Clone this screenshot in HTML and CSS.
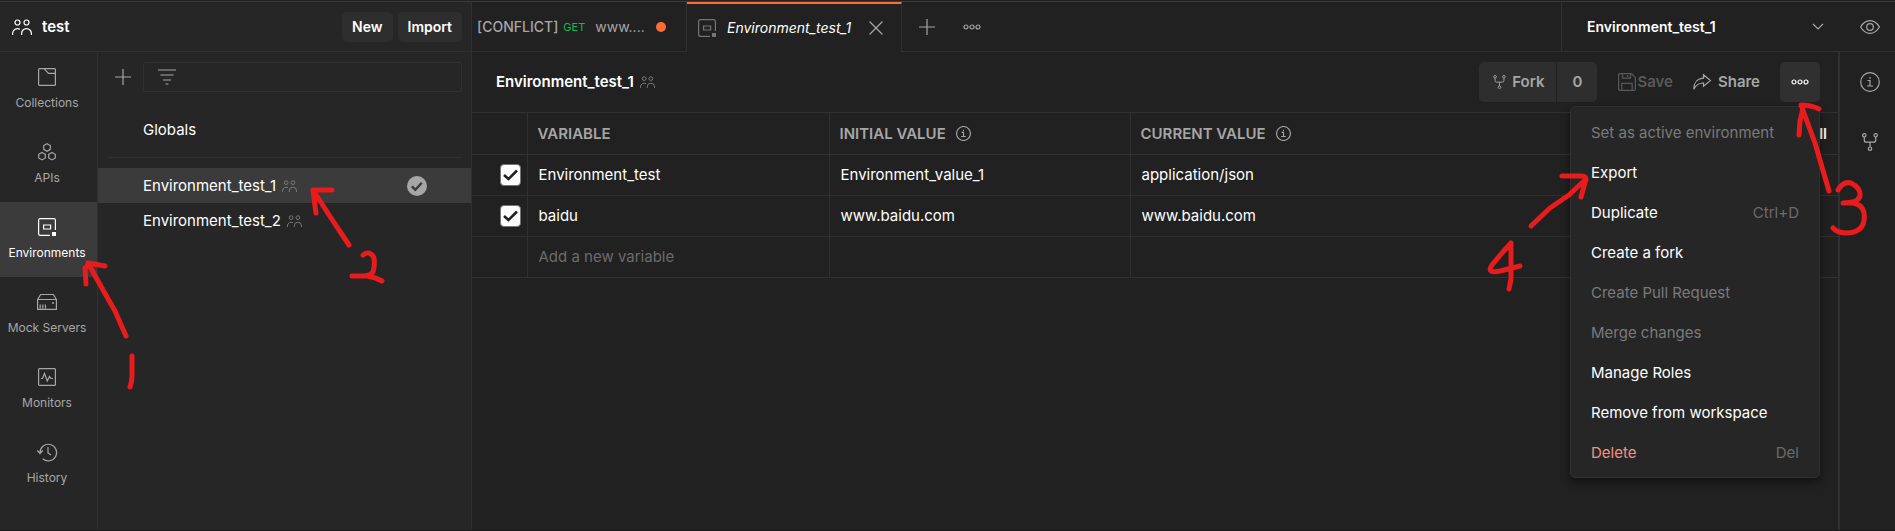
FILE: index.html
```html
<!DOCTYPE html>
<html lang="en">
<head>
    <meta charset="UTF-8">
    <meta name="viewport" content="width=device-width, initial-scale=1.0">
    <title>test</title>
    <link rel="stylesheet" href="styles.css">
</head>
<body>

    <svg class="symbols" aria-hidden="true">
        <symbol id="people" viewBox="0 0 20 16">
            <circle cx="5.5" cy="3.5" r="2.5"/>
            <circle cx="14.5" cy="3.5" r="2.5"/>
            <path d="M.6 16v-1.500a5 5 0 0 1 7.400-4.300M19.400 16v-1.500a4.900 4.900 0 0 0-9.800 0V16"/>
        </symbol>
        <symbol id="environment" viewBox="0 0 18 18">
            <path d="M17.400 12V2.200A1.600 1.600 0 0 0 15.800.6H2.200A1.600 1.600 0 0 0 .6 2.200v13.600a1.600 1.600 0 0 0 1.600 1.600H12"/>
            <path d="M5.600 7h7v4h-7z"/>
            <path class="solid" d="M14 14h4v4h-4z"/>
        </symbol>
        <symbol id="plus" viewBox="0 0 16 16">
            <path d="M8 0v16M0 8h16"/>
        </symbol>
        <symbol id="dots" viewBox="0 0 18 6">
            <circle cx="3" cy="3" r="2"/>
            <circle cx="9" cy="3" r="2"/>
            <circle cx="15" cy="3" r="2"/>
        </symbol>
        <symbol id="info" viewBox="0 0 20 20">
            <circle cx="10" cy="10" r="9.300"/>
            <path d="M7.500 8.500H10V14M7 14h6M10 5v1.700"/>
        </symbol>
        <symbol id="fork" viewBox="0 0 16 18">
            <circle cx="2.300" cy="2.300" r="1.700"/>
            <circle cx="13.700" cy="2.300" r="1.700"/>
            <circle cx="8" cy="15.700" r="1.700"/>
            <path d="M2.300 4v3.200a2 2 0 0 0 2 2h7.400a2 2 0 0 0 2-2V4M8 9.200V14"/>
        </symbol>
    </svg>

    <div class="app">
        <header class="topbar">
            <div class="workspace">
                <svg class="icon people"><use href="#people"/></svg>
                <span class="workspace-name">test</span>
                <button class="btn small">New</button>
                <button class="btn small">Import</button>
            </div>
            <div class="tabs">
                <a href="#" class="tab">
                    <span class="conflict">[CONFLICT]</span>
                    <span class="method">GET</span>
                    <span class="url">www....</span>
                    <span class="unsaved"></span>
                </a>
                <div class="tab active">
                    <svg class="icon env"><use href="#environment"/></svg>
                    <a href="#" class="tab-name">Environment_test_1</a>
                    <button class="icon-btn" aria-label="Close tab">
                        <svg class="icon close" viewBox="0 0 14 14"><path d="M.5.5l13 13M13.500.5l-13 13"/></svg>
                    </button>
                </div>
                <div class="tab-actions">
                    <button class="icon-btn" aria-label="New tab"><svg class="icon plus"><use href="#plus"/></svg></button>
                    <button class="icon-btn" aria-label="Tab options"><svg class="icon dots"><use href="#dots"/></svg></button>
                </div>
            </div>
            <div class="env-picker">
                <select aria-label="Active environment">
                    <option>Environment_test_1</option>
                    <option>Environment_test_2</option>
                </select>
                <button class="icon-btn" aria-label="Environment quick look">
                    <svg class="icon eye" viewBox="0 0 20 14"><path d="M.6 7C3 2.800 6.200.7 10 .7S17 2.800 19.400 7C17 11.200 13.800 13.300 10 13.300S3 11.200.6 7z"/><circle cx="10" cy="7" r="3.300"/></svg>
                </button>
            </div>
        </header>

        <div class="body">
            <nav class="nav">
                <a href="#" class="nav-item">
                    <svg class="icon" viewBox="0 0 20 20"><path d="M2.600 1.600h14.800a1 1 0 0 1 1 1v14.800a1 1 0 0 1-1 1H2.600a1 1 0 0 1-1-1V2.600a1 1 0 0 1 1-1zM7 1.600l4.500 4.800h6.900"/></svg>
                    Collections
                </a>
                <a href="#" class="nav-item">
                    <svg class="icon" viewBox="0 0 20 20"><path d="M10 1.700l3.300 1.900v3.700L10 9.200 6.700 7.300V3.600zM5 10.400l3.300 1.900V16L5 17.900 1.700 16v-3.700zM15 10.400l3.300 1.900V16L15 17.900 11.700 16v-3.700z"/></svg>
                    APIs
                </a>
                <a href="#" class="nav-item current">
                    <svg class="icon env"><use href="#environment"/></svg>
                    Environments
                </a>
                <a href="#" class="nav-item">
                    <svg class="icon" viewBox="0 0 20 20"><path d="M.6 7.500h18.800v9.900H.6zM.6 7.500l3-5h12.800l3 5M3.200 16.500v-4M5.800 16.500v-4M8.400 16.500v-4"/><circle class="solid" cx="16" cy="11" r="1"/></svg>
                    Mock Servers
                </a>
                <a href="#" class="nav-item">
                    <svg class="icon" viewBox="0 0 20 20"><path d="M2.600 1.600h14.800a1 1 0 0 1 1 1v14.800a1 1 0 0 1-1 1H2.600a1 1 0 0 1-1-1V2.600a1 1 0 0 1 1-1zM4 11.500h1.500l2-5 2.800 7.500 2.200-4.500 1.500 2h2"/></svg>
                    Monitors
                </a>
                <a href="#" class="nav-item">
                    <svg class="icon" viewBox="0 0 20 20"><path d="M3 10.500a8.300 8.300 0 1 1 2.800 6.300M.4 8.500L3 11.500l2.800-3M11 5v6l3 2"/></svg>
                    History
                </a>
            </nav>

            <aside class="sidebar">
                <div class="sidebar-tools">
                    <button class="icon-btn" aria-label="Create environment"><svg class="icon plus"><use href="#plus"/></svg></button>
                    <label class="filter">
                        <svg class="icon" viewBox="0 0 18 16"><path d="M0 1h18M2.500 6h13M5 11h8M7.500 15h3"/></svg>
                        <input type="text" aria-label="Filter environments">
                    </label>
                </div>
                <a href="#" class="globals">Globals</a>
                <ul class="env-list">
                    <li class="env-row selected">
                        <a href="#">Environment_test_1</a>
                        <svg class="icon people-sm"><use href="#people"/></svg>
                        <svg class="active-mark" viewBox="0 0 20 20"><circle cx="10" cy="10" r="10"/><path d="M4.800 10.300l3.500 3.400 6.500-7"/></svg>
                    </li>
                    <li class="env-row">
                        <a href="#">Environment_test_2</a>
                        <svg class="icon people-sm"><use href="#people"/></svg>
                    </li>
                </ul>
            </aside>

            <main class="editor">
                <div class="editor-head">
                    <h1>Environment_test_1</h1>
                    <svg class="icon people-sm"><use href="#people"/></svg>
                    <div class="actions">
                        <div class="fork-group">
                            <button class="btn"><svg class="icon fork"><use href="#fork"/></svg>Fork</button>
                            <button class="btn count">0</button>
                        </div>
                        <button class="plain save" disabled>
                            <svg class="icon" viewBox="0 0 18 18"><path d="M2 .6h11.500l3.900 3.900V16a1.400 1.400 0 0 1-1.400 1.400H2A1.400 1.400 0 0 1 .6 16V2A1.400 1.400 0 0 1 2 .6zM4.500.6v4.600h8V.6M9.500 2v2M3.800 17.400v-7h10.400v7"/></svg>Save
                        </button>
                        <button class="plain share">
                            <svg class="icon" viewBox="0 0 18 16"><path d="M10.500.8l6.900 5.700-6.900 5.700V9C6 8.800 3 10.800.8 15.200.9 8.800 4.500 4.500 10.500 4.200z"/></svg>Share
                        </button>
                        <div class="more">
                            <button class="btn more-btn" aria-label="More actions"><svg class="icon dots"><use href="#dots"/></svg></button>
                            <div class="menu">
                                <button disabled>Set as active environment</button>
                                <button>Export</button>
                                <button>Duplicate <kbd>Ctrl+D</kbd></button>
                                <button>Create a fork</button>
                                <button disabled>Create Pull Request</button>
                                <button disabled>Merge changes</button>
                                <button>Manage Roles</button>
                                <button>Remove from workspace</button>
                                <button class="danger">Delete <kbd>Del</kbd></button>
                            </div>
                        </div>
                    </div>
                </div>

                <table class="variables">
                    <thead>
                        <tr>
                            <th class="check"></th>
                            <th class="variable">VARIABLE</th>
                            <th class="initial"><div class="head-cell">INITIAL VALUE <svg class="icon info-sm"><use href="#info"/></svg></div></th>
                            <th><div class="head-cell">CURRENT VALUE <svg class="icon info-sm"><use href="#info"/></svg><a href="#">Persist All</a></div></th>
                        </tr>
                    </thead>
                    <tbody>
                        <tr>
                            <td class="check"><input type="checkbox" aria-label="Enable Environment_test" checked></td>
                            <td>Environment_test</td>
                            <td>Environment_value_1</td>
                            <td>application/json</td>
                        </tr>
                        <tr>
                            <td class="check"><input type="checkbox" aria-label="Enable baidu" checked></td>
                            <td>baidu</td>
                            <td>www.baidu.com</td>
                            <td>www.baidu.com</td>
                        </tr>
                        <tr>
                            <td class="check"></td>
                            <td><input type="text" class="new-variable" aria-label="New variable" placeholder="Add a new variable"></td>
                            <td></td>
                            <td></td>
                        </tr>
                    </tbody>
                </table>
            </main>

            <aside class="rail">
                <button class="icon-btn" aria-label="Environment details"><svg class="icon info"><use href="#info"/></svg></button>
                <button class="icon-btn" aria-label="Forks"><svg class="icon fork"><use href="#fork"/></svg></button>
            </aside>
        </div>

        <!-- hand-drawn step marks -->
        <svg class="marks left" viewBox="0 0 400 400" aria-label="Steps 1 and 2">
            <path d="M105 266l-17-3 15 27 12 21 11 25M88 265l-3 3 1 16"/>
            <path d="M132 356v20q0 6-2 11"/>
            <path d="M332 190h-19l18 28 18 27M313 191l3 22"/>
            <path d="M363 255q7-5 11 3 1 8-1 14-3 4-10 4h-11 15q8 1 15 5"/>
        </svg>
        <svg class="marks right" viewBox="0 0 420 300" aria-label="Steps 3 and 4">
            <path d="M344 109q-8-4-18-4l14 38 14 48M328 108l-3 13-1 14"/>
            <path d="M363 190q5-9 13-7 10 5 9 13-2 7-17 7 19-2 21 10 2 15-10 19-15 3-21-4"/>
            <path d="M56 226l19-18 19-13 17-16-5 18M87 176h20q4 0 4 4"/>
            <path d="M36 243q-11 12-19 22-6 9 8 6l20-5M36 243v36l-2 10"/>
        </svg>
    </div>

</body>
</html>
```

FILE: styles.css
```css
* {
    box-sizing: border-box;
}
body {
    margin: 0;
    background: #212121;
    color: #fff;
    font-family: Inter, "Liberation Sans", sans-serif;
    font-size: 15px;
    line-height: 20px;
}
a {
    color: inherit;
    text-decoration: none;
}
button, input, select {
    font: inherit;
    color: inherit;
}
button {
    cursor: pointer;
}
.symbols {
    position: absolute;
    width: 0;
    height: 0;
}
.icon {
    flex: none;
    display: block;
    width: 20px;
    height: 20px;
    fill: none;
    stroke: currentColor;
    stroke-width: 1.2;
    overflow: visible;
}
.solid {
    fill: currentColor;
    stroke: none;
}
.icon.people {
    height: 16px;
}
.icon.people-sm {
    width: 15px;
    height: 12px;
    color: #808080;
}
.icon.env {
    width: 18px;
    height: 18px;
}
.icon.plus {
    width: 16px;
    height: 16px;
}
.icon.dots {
    width: 18px;
    height: 6px;
}
.icon-btn {
    display: flex;
    padding: 0;
    border: 0;
    background: none;
    color: #a6a6a6;
}
.app {
    position: relative;
    display: flex;
    flex-direction: column;
    min-height: 100vh;
    padding-top: 1px;
    border-bottom: 1px solid #1a1a1a;
}

/* top bar */
.topbar {
    display: flex;
    height: 51px;
    border-top: 1px solid #3a3a3a;
}
.workspace {
    flex: none;
    display: flex;
    align-items: center;
    gap: 5px;
    width: 472px;
    padding: 0 9px 0 12px;
    background: #262626;
    border-right: 1px solid #303030;
    border-bottom: 1px solid #303030;
}
.workspace-name {
    flex: 1;
    padding-left: 5px;
    font-weight: 600;
}
.btn {
    display: flex;
    align-items: center;
    justify-content: center;
    height: 40px;
    padding: 0 12px;
    border: 0;
    border-radius: 5px;
    background: #2e2e2e;
    color: #a6a6a6;
    font-weight: 600;
}
.btn.small {
    height: 30px;
    padding: 0 10px;
    color: #fff;
    font-size: 14px;
}
.tabs {
    flex: 1;
    display: flex;
    min-width: 0;
}
.tab {
    flex: none;
    display: flex;
    align-items: center;
    width: 215px;
    padding-left: 5px;
    border-right: 1px solid #303030;
    border-bottom: 1px solid #303030;
    color: #a6a6a6;
}
.conflict {
    font-size: 14px;
    font-weight: 500;
}
.method {
    margin-left: 5px;
    color: #0cbb52;
    font-size: 11px;
}
.url {
    margin-left: 10px;
    font-size: 14px;
}
.unsaved {
    width: 10px;
    height: 10px;
    margin-left: 11px;
    border-radius: 50%;
    background: #ff6c37;
}
.tab.active {
    border-top: 2px solid #ff6c37;
    border-bottom: 0;
    padding-left: 11px;
    color: #757575;
}
.tab-name {
    flex: 1;
    margin-left: 11px;
    color: #fff;
    font-size: 14px;
    font-style: italic;
}
.tab.active .icon-btn {
    margin-right: 18px;
}
.icon.close {
    width: 14px;
    height: 14px;
}
.tab-actions {
    flex: 1;
    display: flex;
    align-items: center;
    gap: 28px;
    padding-left: 17px;
    border-bottom: 1px solid #303030;
}
.env-picker {
    flex: none;
    display: flex;
    align-items: center;
    gap: 32px;
    width: 334px;
    padding: 0 15px 0 25px;
    border-left: 1px solid #303030;
    border-bottom: 1px solid #303030;
}
.env-picker select {
    flex: 1;
    height: 30px;
    padding: 0;
    border: 0;
    appearance: none;
    background: url("data:image/svg+xml,%3Csvg xmlns='http://www.w3.org/2000/svg' width='12' height='8' fill='none' stroke='%23a6a6a6' stroke-width='1.200'%3E%3Cpath d='M1 1l5 5 5-5'/%3E%3C/svg%3E") no-repeat right 4px center;
    font-size: 14px;
    font-weight: 600;
}
.icon.eye {
    height: 14px;
}
.body {
    flex: 1;
    display: flex;
}

/* left navigation */
.nav {
    flex: none;
    width: 98px;
    background: #262626;
    border-right: 1px solid #303030;
}
.nav-item {
    display: flex;
    flex-direction: column;
    align-items: center;
    gap: 6px;
    height: 75px;
    padding: 15px 3px 0 0;
    color: #a6a6a6;
    font-size: 12px;
    white-space: nowrap;
}
.nav-item .icon.env {
    margin: 1px;
}
.nav-item.current {
    background: #3b3b3b;
    color: #fff;
}

/* environment list */
.sidebar {
    flex: none;
    width: 374px;
    background: #262626;
    border-right: 1px solid #303030;
}
.sidebar-tools {
    display: flex;
    align-items: center;
    gap: 12px;
    padding: 10px 9px 10px 17px;
}
.filter {
    flex: 1;
    display: flex;
    align-items: center;
    height: 30px;
    padding: 0 14px;
    border: 1px solid #303030;
    border-radius: 2px;
    color: #a6a6a6;
}
.filter .icon {
    width: 18px;
    height: 16px;
}
.filter input {
    flex: 1;
    min-width: 0;
    border: 0;
    outline: 0;
    background: none;
}
.globals {
    display: block;
    margin: 0 9px 10px 10px;
    padding: 18px 0 17px 35px;
    border-bottom: 1px solid #303030;
}
.env-list {
    margin: 0;
    padding: 0;
    list-style: none;
}
.env-row {
    display: flex;
    align-items: center;
    gap: 6px;
    height: 35px;
    padding: 0 44px 0 45px;
}
.env-row.selected {
    background: #3b3b3b;
}
.active-mark {
    width: 20px;
    height: 20px;
    margin-left: auto;
    fill: #a6a6a6;
}
.active-mark path {
    fill: none;
    stroke: #3b3b3b;
    stroke-width: 2.4;
}

/* editor */
.editor {
    flex: 1;
    min-width: 0;
}
.editor-head {
    display: flex;
    align-items: center;
    gap: 6px;
    height: 60px;
    padding: 0 18px 0 24px;
}
h1 {
    margin: 0;
    font-size: 15px;
    font-weight: 600;
}
.actions {
    display: flex;
    align-items: center;
    margin-left: auto;
}
.fork-group {
    display: flex;
    gap: 1px;
}
.fork-group .btn:first-child {
    gap: 6px;
    padding: 0 12px 0 14px;
    border-radius: 5px 0 0 5px;
}
.fork-group .btn.count {
    width: 40px;
    border-radius: 0 5px 5px 0;
}
.actions .icon.fork {
    width: 13px;
    height: 14px;
}
.plain {
    display: flex;
    align-items: center;
    padding: 0;
    border: 0;
    background: none;
    color: #a6a6a6;
    font-weight: 600;
}
.plain .icon {
    width: 18px;
    height: 18px;
}
.save {
    gap: 1px;
    margin-left: 21px;
    color: #595959;
}
.share {
    gap: 7px;
    margin: 0 20px;
}
.share .icon {
    height: 16px;
}
.more {
    position: relative;
}
.more-btn {
    width: 40px;
    padding: 0;
    background: #303030;
    color: #fff;
}
.menu {
    position: absolute;
    z-index: 1;
    top: 44px;
    right: 0;
    width: 250px;
    padding: 6px 0 4px;
    border: 1px solid #303030;
    border-radius: 5px;
    background: #262626;
    box-shadow: 0 4px 10px rgba(0, 0, 0, 0.5);
}
.menu button {
    display: flex;
    align-items: center;
    justify-content: space-between;
    width: 100%;
    height: 40px;
    padding: 0 20px;
    border: 0;
    background: none;
}
.menu button:disabled {
    color: #7a7a7a;
}
.menu kbd {
    color: #6b6b6b;
    font-family: inherit;
}
.menu .danger {
    color: #f79082;
}

/* variables table */
.variables {
    width: 100%;
    table-layout: fixed;
    border-collapse: collapse;
}
.variables th, .variables td {
    height: 41px;
    padding: 0 11px;
    border: 1px solid #303030;
    border-left: 0;
    text-align: left;
}
.variables th:last-child, .variables td:last-child {
    border-right: 0;
}
.variables th {
    height: 42px;
    padding-left: 10px;
    color: #a6a6a6;
    font-weight: 600;
    white-space: nowrap;
}
.variables .check {
    width: 55px;
    padding: 0 6px 0 0;
}
.variable {
    width: 302px;
}
.initial {
    width: 301px;
}
.icon.info-sm {
    width: 15px;
    height: 15px;
    stroke-width: 1.5;
}
.head-cell {
    display: flex;
    align-items: center;
    gap: 10px;
}
.head-cell a {
    margin-left: auto;
    color: #fff;
}
.variables input[type="checkbox"] {
    display: block;
    width: 21px;
    height: 22px;
    margin: 0 0 0 auto;
    appearance: none;
    border: 1px solid #757575;
    border-radius: 4px;
    background: #fff url("data:image/svg+xml,%3Csvg xmlns='http://www.w3.org/2000/svg' width='15' height='12' fill='none' stroke='%23212121' stroke-width='2.600'%3E%3Cpath d='M1 6l4.500 4L14 1.500'/%3E%3C/svg%3E") no-repeat center;
}
.new-variable {
    width: 100%;
    padding: 0;
    border: 0;
    outline: 0;
    background: none;
}
.new-variable::placeholder {
    color: #6b6b6b;
}

/* right rail */
.rail {
    flex: none;
    display: flex;
    flex-direction: column;
    align-items: center;
    gap: 41px;
    width: 57px;
    padding: 20px 0 0 5px;
    border-left: 2px solid #303030;
}
.rail .icon.fork {
    width: 16px;
    height: 18px;
}

/* hand-drawn marks */
.marks {
    position: absolute;
    z-index: 2;
    top: 0;
    fill: none;
    stroke: #e81c1c;
    stroke-width: 5;
    stroke-linecap: round;
    stroke-linejoin: round;
    pointer-events: none;
}
.marks.left {
    left: 0;
    width: 400px;
}
.marks.right {
    right: 0;
    width: 420px;
}
```
